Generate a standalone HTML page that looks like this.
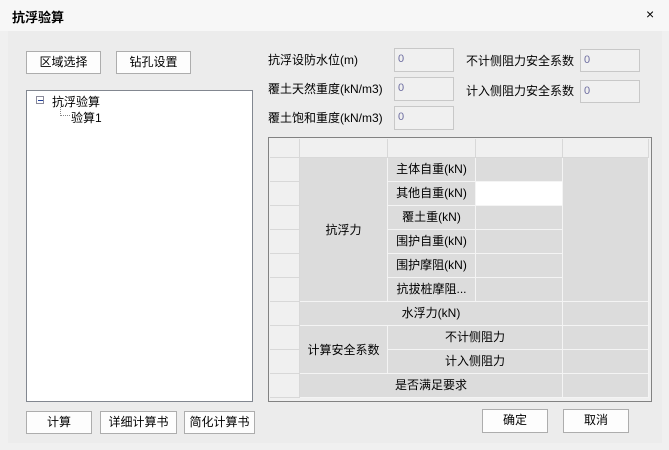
<!DOCTYPE html><html><head><meta charset="utf-8"><style>
body{margin:0;width:669px;height:450px;background:#f0f0f0;font-family:"Liberation Sans","Noto Sans CJK SC",sans-serif;font-size:12px;color:#000;position:relative;overflow:hidden}
.a{position:absolute;box-sizing:border-box}
.btn{border:1px solid #adadad;background:#fdfdfd;text-align:center;line-height:20px}
.inp{border:1px solid #c8c8c8;background:#f0f0f0;color:#6d6da0;padding-left:3px;line-height:20px;font-size:11px}
.c{position:absolute;box-sizing:border-box;background:#dcdcdc;text-align:center;line-height:23px;border-right:1px solid #f4f4f4;border-bottom:1px solid #f4f4f4}
.h{background:#f0f0f0;border-right:1px solid #d8d8d8;border-bottom:1px solid #d8d8d8}
</style></head><body>
<div class="a" style="left:0;top:0;width:669px;height:31px;background:#f7f7f7"></div>
<div class="a" style="left:12px;top:7px;font-weight:bold;font-size:13px">抗浮验算</div>
<div class="a" style="left:646px;top:6px;font-size:14px">×</div>
<div class="a" style="left:8px;top:31px;width:654px;height:412px;background:#ececec"></div>
<div class="a btn" style="left:26px;top:51px;width:75px;height:23px">区域选择</div>
<div class="a btn" style="left:116px;top:51px;width:75px;height:23px">钻孔设置</div>
<div class="a" style="left:26px;top:90px;width:227px;height:312px;background:#fff;border:1px solid #828790"></div>
<div class="a" style="left:36px;top:96px;width:8px;height:8px;border:1px solid #8a8a9a"></div>
<div class="a" style="left:38px;top:100px;width:5px;height:1px;background:#2040a0"></div>
<div class="a" style="left:52px;top:93px">抗浮验算</div>
<div class="a" style="left:60px;top:107px;width:10px;height:9px;border-left:1px dotted #888;border-bottom:1px dotted #888"></div>
<div class="a" style="left:71px;top:109px">验算1</div>
<div class="a btn" style="left:26px;top:411px;width:66px;height:23px">计算</div>
<div class="a btn" style="left:100px;top:411px;width:77px;height:23px">详细计算书</div>
<div class="a btn" style="left:184px;top:411px;width:71px;height:23px">简化计算书</div>
<div class="a" style="left:268px;top:51px">抗浮设防水位(m)</div>
<div class="a" style="left:268px;top:80px">覆土天然重度(kN/m3)</div>
<div class="a" style="left:268px;top:109px">覆土饱和重度(kN/m3)</div>
<div class="a inp" style="left:394px;top:48px;width:60px;height:24px">0</div>
<div class="a inp" style="left:394px;top:77px;width:60px;height:24px">0</div>
<div class="a inp" style="left:394px;top:106px;width:60px;height:24px">0</div>
<div class="a" style="left:466px;top:52px">不计侧阻力安全系数</div>
<div class="a" style="left:466px;top:82px">计入侧阻力安全系数</div>
<div class="a inp" style="left:580px;top:49px;width:60px;height:23px">0</div>
<div class="a inp" style="left:580px;top:80px;width:60px;height:23px">0</div>
<div class="a" style="left:268px;top:137px;width:384px;height:265px;border:1px solid #828282;background:#f0f0f0"></div>
<div class="c h" style="left:270px;top:139px;width:30px;height:19px"></div>
<div class="c h" style="left:300px;top:139px;width:88px;height:19px"></div>
<div class="c h" style="left:388px;top:139px;width:88px;height:19px"></div>
<div class="c h" style="left:476px;top:139px;width:87px;height:19px"></div>
<div class="c h" style="left:563px;top:139px;width:86px;height:19px"></div>
<div class="c h" style="left:270px;top:158px;width:30px;height:24px"></div>
<div class="c h" style="left:270px;top:182px;width:30px;height:24px"></div>
<div class="c h" style="left:270px;top:206px;width:30px;height:24px"></div>
<div class="c h" style="left:270px;top:230px;width:30px;height:24px"></div>
<div class="c h" style="left:270px;top:254px;width:30px;height:24px"></div>
<div class="c h" style="left:270px;top:278px;width:30px;height:24px"></div>
<div class="c h" style="left:270px;top:302px;width:30px;height:24px"></div>
<div class="c h" style="left:270px;top:326px;width:30px;height:24px"></div>
<div class="c h" style="left:270px;top:350px;width:30px;height:24px"></div>
<div class="c h" style="left:270px;top:374px;width:30px;height:24px"></div>
<div class="c" style="left:300px;top:158px;width:88px;height:144px;line-height:144px">抗浮力</div>
<div class="c" style="left:388px;top:158px;width:88px;height:24px">主体自重(kN)</div>
<div class="c" style="left:388px;top:182px;width:88px;height:24px">其他自重(kN)</div>
<div class="c" style="left:388px;top:206px;width:88px;height:24px">覆土重(kN)</div>
<div class="c" style="left:388px;top:230px;width:88px;height:24px">围护自重(kN)</div>
<div class="c" style="left:388px;top:254px;width:88px;height:24px">围护摩阻(kN)</div>
<div class="c" style="left:388px;top:278px;width:88px;height:24px">抗拔桩摩阻...</div>
<div class="c" style="left:476px;top:158px;width:87px;height:24px"></div>
<div class="c" style="left:476px;top:182px;width:87px;height:24px;background:#fff"></div>
<div class="c" style="left:476px;top:206px;width:87px;height:24px"></div>
<div class="c" style="left:476px;top:230px;width:87px;height:24px"></div>
<div class="c" style="left:476px;top:254px;width:87px;height:24px"></div>
<div class="c" style="left:476px;top:278px;width:87px;height:24px"></div>
<div class="c" style="left:563px;top:158px;width:86px;height:144px"></div>
<div class="c" style="left:300px;top:302px;width:263px;height:24px">水浮力(kN)</div>
<div class="c" style="left:563px;top:302px;width:86px;height:24px"></div>
<div class="c" style="left:300px;top:326px;width:88px;height:48px;line-height:48px">计算安全系数</div>
<div class="c" style="left:388px;top:326px;width:175px;height:24px">不计侧阻力</div>
<div class="c" style="left:388px;top:350px;width:175px;height:24px">计入侧阻力</div>
<div class="c" style="left:563px;top:326px;width:86px;height:24px"></div>
<div class="c" style="left:563px;top:350px;width:86px;height:24px"></div>
<div class="c" style="left:300px;top:374px;width:263px;height:24px">是否满足要求</div>
<div class="c" style="left:563px;top:374px;width:86px;height:24px"></div>
<div class="a btn" style="left:482px;top:409px;width:66px;height:24px">确定</div>
<div class="a btn" style="left:563px;top:409px;width:66px;height:24px">取消</div>
</body></html>
